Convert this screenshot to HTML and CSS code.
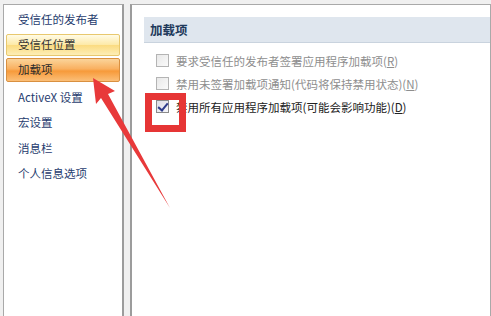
FILE: index.html
```html
<!DOCTYPE html>
<html lang="zh-CN">
<head>
  <meta charset="UTF-8">
  <title>信任中心</title>
  <link rel="stylesheet" href="styles.css">
</head>
<body>
  <ul class="nav">
    <li>受信任的发布者</li>
    <li class="hover">受信任位置</li>
    <li class="active">加载项</li>
    <li>ActiveX 设置</li>
    <li>宏设置</li>
    <li>消息栏</li>
    <li>个人信息选项</li>
  </ul>
  <div class="main">
    <div class="title">加载项</div>
    <div class="opt disabled"><span class="box"></span>要求受信任的发布者签署应用程序加载项(<u>R</u>)</div>
    <div class="opt disabled"><span class="box"></span>禁用未签署加载项通知(代码将保持禁用状态)(<u>N</u>)</div>
    <div class="opt"><span class="box checked"></span>禁用所有应用程序加载项(可能会影响功能)(<u>D</u>)</div>
  </div>

  <!-- 标注：红框 + 箭头 -->
  <div class="mark"></div>
  <svg class="arrow" width="491" height="316" viewBox="0 0 491 316">
    <polygon points="93,78 115,91 108,94 170,208 101,98 96,104" fill="#e8393a"/>
  </svg>
</body>
</html>
```

FILE: styles.css
```css
* {
  margin: 0;
  padding: 0;
  box-sizing: border-box;
}

body {
  width: 491px;
  height: 316px;
  overflow: hidden;
  background-color: #f0f0f0;
  display: flex;
  gap: 6px;
  padding: 4px 0 0 3px;
  font-family: "Noto Sans CJK SC", "Noto Sans", sans-serif;
  position: relative;
}

.nav {
  list-style: none;
  width: 121px;
  height: 312px;
  background-color: #fff;
  border: 1px solid #a9a9a9;
  border-right: 2px solid #9c9c9c;
  border-bottom: none;
  padding: 2px 2px 0 2px;
}

.nav li {
  height: 25.5px;
  line-height: 23px;
  padding-left: 11px;
  font-size: 11.5px;
  color: #1f3c6e;
  border: 1px solid transparent;
  border-radius: 2px;
}

.nav li.hover {
  margin-top: 1px;
  height: 22px;
  line-height: 19px;
  background: linear-gradient(#fffbe6, #fde9a6 50%, #fbdb80 51%, #fdeeb6);
  border-color: #e8c86e;
  color: #333;
  margin-bottom: 2px;
}

.nav li.active {
  height: 24px;
  line-height: 21px;
  background: linear-gradient(#fbd49a, #f9b060 45%, #f79a3a 55%, #fbbf78);
  border-color: #d99040;
  color: #2b2b2b;
  margin-bottom: 3px;
}

.main {
  flex: 1;
  height: 312px;
  background-color: #fff;
  border: 1px solid #a9a9a9;
  border-left: 2px solid #9c9c9c;
  border-bottom: none;
  padding: 12px 0 0 12px;
}

.title {
  height: 26px;
  line-height: 26px;
  padding-left: 6px;
  font-size: 12.5px;
  font-weight: bold;
  color: #1e395b;
  background-color: #dfe6ee;
  border-bottom: 1px solid #c9d3de;
  margin-bottom: 6px;
}

.opt {
  display: flex;
  align-items: center;
  height: 23px;
  padding-left: 12px;
  font-size: 11.5px;
  color: #222;
  white-space: nowrap;
}

.opt.disabled {
  color: #8e8e8e;
}

.box {
  width: 13px;
  height: 13px;
  margin-right: 7px;
  border: 1px solid #b4b4b4;
  background: linear-gradient(135deg, #e8e8e8, #fafafa);
  position: relative;
}

.box.checked {
  border-color: #8a8a8a;
  background: linear-gradient(135deg, #dcdce6, #f6f6fa);
}

.box.checked::after {
  content: "";
  position: absolute;
  left: 3px;
  top: 0px;
  width: 4px;
  height: 8px;
  border-right: 2px solid #2d3b8a;
  border-bottom: 2px solid #2d3b8a;
  transform: rotate(40deg);
}

.mark {
  position: absolute;
  left: 145px;
  top: 93px;
  width: 41px;
  height: 39px;
  border: 7px solid #e63535;
}

.arrow {
  position: absolute;
  left: 0;
  top: 0;
}
```
